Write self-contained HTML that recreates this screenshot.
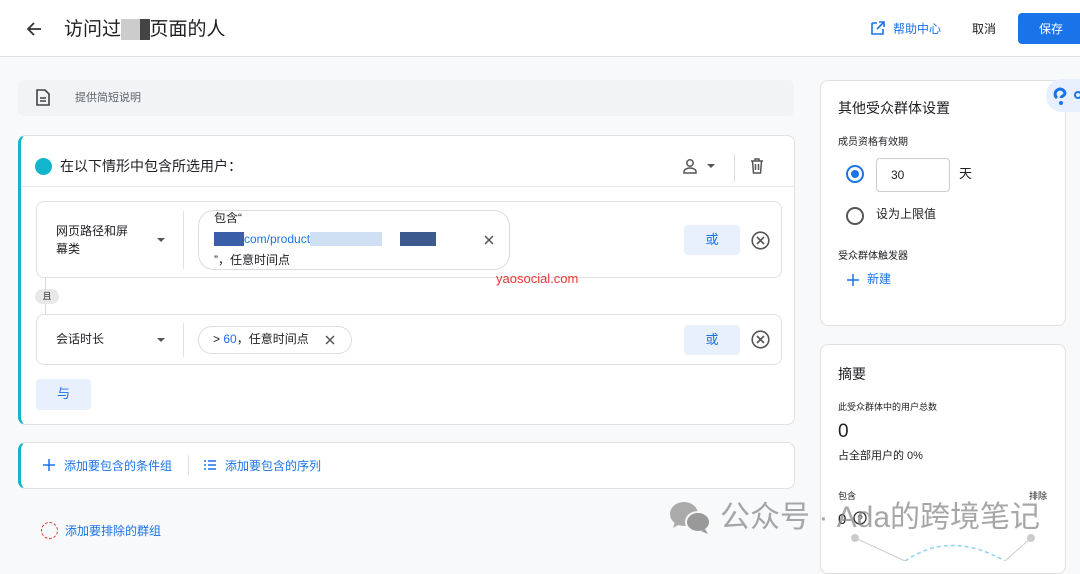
<!DOCTYPE html>
<html><head><meta charset="utf-8"><style>
*{box-sizing:border-box;margin:0;padding:0}
body{width:1080px;height:561px;overflow:hidden;background:#f8f9fa;font-family:"Liberation Sans","Noto Sans CJK SC",sans-serif;color:#202124;position:relative;line-height:1.3}
.a{position:absolute}
.card{position:absolute;background:#fff;border:1px solid #e0e0e0;border-radius:8px}
.blue{color:#1a73e8}
.btn{position:absolute;background:#e8f0fe;border-radius:4px;color:#1a73e8;font-size:13px;display:flex;align-items:center;justify-content:center}
</style></head><body>
<div class="a" style="left:0;top:0;width:1080px;height:57px;background:#fff;border-bottom:1px solid #e0e0e0"></div>
<svg class="a" style="left:26px;top:21px" width="16" height="16" viewBox="0 0 16 16"><path d="M15 8H2M8 2L2 8l6 6" stroke="#333" stroke-width="1.8" fill="none"/></svg>
<div class="a" style="left:64px;top:18px;font-size:19px">访问过<span style="background:#ccc;color:#ccc">xx</span><span style="background:#444;color:#444">x</span>页面的人</div>
<svg class="a" style="left:871px;top:21px" width="14" height="14" viewBox="0 0 14 14"><path d="M1 2h5M1 2v11h11V8M8 1h5v5M13 1L6 8" stroke="#1a73e8" stroke-width="1.6" fill="none"/></svg>
<div class="a blue" style="left:893px;top:22px;font-size:12px">帮助中心</div>
<div class="a" style="left:972px;top:22px;font-size:12px">取消</div>
<div class="a" style="left:1018px;top:13px;width:70px;height:31px;background:#1a73e8;border-radius:4px;color:#fff;font-size:12px;padding:9px 0 0 21px">保存</div>

<div class="a" style="left:18px;top:80px;width:776px;height:36px;background:#f1f3f4;border-radius:6px"></div>
<svg class="a" style="left:36px;top:89px" width="14" height="17" viewBox="0 0 14 17"><path d="M1 1h8l4 4v11H1z M4 9h6M4 12h6" stroke="#444" stroke-width="1.6" fill="none"/></svg>
<div class="a" style="left:75px;top:91px;font-size:11px;color:#5f6368">提供简短说明</div>

<div class="card" style="left:18px;top:135px;width:777px;height:290px;border-left:3px solid #12b5cb"></div>
<div class="a" style="left:21px;top:186px;width:773px;height:1px;background:#e8e8e8"></div>
<div class="a" style="left:35px;top:158px;width:17px;height:17px;border-radius:50%;background:#12b5cb"></div>
<div class="a" style="left:60px;top:157px;font-size:14px">在以下情形中包含所选用户：</div>
<svg class="a" style="left:683px;top:158px" width="36" height="16" viewBox="0 0 36 16"><circle cx="7" cy="5" r="3.2" stroke="#555" stroke-width="1.5" fill="none"/><path d="M1 15v-1.5c0-2 3-3.5 6-3.5s6 1.5 6 3.5V15z" stroke="#555" stroke-width="1.5" fill="none"/><path d="M24 6h8l-4 4z" fill="#555"/></svg>
<div class="a" style="left:734px;top:154px;width:1px;height:28px;background:#ddd"></div>
<svg class="a" style="left:750px;top:158px" width="14" height="16" viewBox="0 0 14 16"><path d="M1 3h12M5 3V1h4v2M2.5 3l1 12h7l1-12M5.5 6v6M8.5 6v6" stroke="#555" stroke-width="1.5" fill="none"/></svg>

<div class="card" style="left:36px;top:201px;width:746px;height:77px"></div>
<div class="a" style="left:56px;top:222px;font-size:12px;line-height:18px">网页路径和屏<br>幕类</div>
<svg class="a" style="left:157px;top:238px" width="8" height="5"><path d="M0 0h8L4 4z" fill="#555"/></svg>
<div class="a" style="left:183px;top:211px;width:1px;height:58px;background:#e0e0e0"></div>
<div class="a" style="left:198px;top:210px;width:312px;height:60px;border:1px solid #dadce0;border-radius:16px"></div>
<div class="a" style="left:214px;top:211px;font-size:12px">包含“</div>
<div class="a" style="left:214px;top:232px;font-size:12px"><span style="background:#3b5ea8;color:#3b5ea8">xxxxx</span><span class="blue">com/product</span><span style="background:#cfe0f5;color:transparent">xxxxxxxxxxxx</span><span style="color:transparent">xxx</span><span style="background:#3d5a8f;color:transparent">xxxxxx</span></div>
<svg class="a" style="left:484px;top:235px" width="10" height="10"><path d="M1 1l8 8M9 1l-8 8" stroke="#555" stroke-width="1.5"/></svg>
<div class="a" style="left:214px;top:253px;font-size:12px">”，任意时间点</div>
<div class="a" style="left:496px;top:271px;font-size:13px;color:#e53935">yaosocial.com</div>
<div class="btn" style="left:684px;top:225px;width:56px;height:30px">或</div>
<svg class="a" style="left:751px;top:231px" width="19" height="19"><circle cx="9.5" cy="9.5" r="8.3" stroke="#555" stroke-width="1.6" fill="none"/><path d="M6 6l7 7M13 6l-7 7" stroke="#555" stroke-width="1.6"/></svg>
<div class="a" style="left:45px;top:278px;width:1px;height:36px;background:#ddd"></div>
<div class="a" style="left:35px;top:289px;width:24px;height:15px;background:#e8e8e8;border-radius:8px;font-size:9px;text-align:center;line-height:15px">且</div>

<div class="card" style="left:36px;top:314px;width:746px;height:51px"></div>
<div class="a" style="left:56px;top:332px;font-size:12px">会话时长</div>
<svg class="a" style="left:157px;top:338px" width="8" height="5"><path d="M0 0h8L4 4z" fill="#555"/></svg>
<div class="a" style="left:183px;top:323px;width:1px;height:34px;background:#e0e0e0"></div>
<div class="a" style="left:198px;top:326px;width:154px;height:28px;border:1px solid #dadce0;border-radius:14px"></div>
<div class="a" style="left:213px;top:332px;font-size:12px">&gt; <span class="blue">60</span>，任意时间点</div>
<svg class="a" style="left:325px;top:335px" width="10" height="10"><path d="M1 1l8 8M9 1l-8 8" stroke="#555" stroke-width="1.5"/></svg>
<div class="btn" style="left:684px;top:325px;width:56px;height:30px">或</div>
<svg class="a" style="left:751px;top:330px" width="19" height="19"><circle cx="9.5" cy="9.5" r="8.3" stroke="#555" stroke-width="1.6" fill="none"/><path d="M6 6l7 7M13 6l-7 7" stroke="#555" stroke-width="1.6"/></svg>
<div class="btn" style="left:36px;top:379px;width:55px;height:31px">与</div>

<div class="card" style="left:18px;top:442px;width:777px;height:47px;border-left:3px solid #12b5cb"></div>
<svg class="a" style="left:43px;top:459px" width="12" height="12"><path d="M6 0v12M0 6h12" stroke="#1a73e8" stroke-width="1.5"/></svg>
<div class="a blue" style="left:64px;top:459px;font-size:12px">添加要包含的条件组</div>
<div class="a" style="left:188px;top:455px;width:1px;height:20px;background:#ddd"></div>
<svg class="a" style="left:204px;top:460px" width="12" height="10"><path d="M0 1h2M4 1h8M0 5h2M4 5h8M0 9h2M4 9h8" stroke="#1a73e8" stroke-width="1.4"/></svg>
<div class="a blue" style="left:225px;top:459px;font-size:12px">添加要包含的序列</div>
<div class="a" style="left:41px;top:522px;width:17px;height:17px;border:1.5px dashed #e53935;border-radius:50%"></div>
<div class="a blue" style="left:65px;top:524px;font-size:12px">添加要排除的群组</div>

<div class="card" style="left:820px;top:80px;width:246px;height:246px"></div>
<div class="a" style="left:838px;top:99px;font-size:14px">其他受众群体设置</div>
<div class="a" style="left:838px;top:136px;font-size:10px">成员资格有效期</div>
<div class="a" style="left:846px;top:165px;width:18px;height:18px;border:2px solid #1a73e8;border-radius:50%"></div>
<div class="a" style="left:851px;top:170px;width:8px;height:8px;background:#1a73e8;border-radius:50%"></div>
<div class="a" style="left:876px;top:158px;width:74px;height:34px;border:1px solid #ccc;border-radius:4px;font-size:12px;padding:9px 0 0 14px">30</div>
<div class="a" style="left:959px;top:166px;font-size:13px">天</div>
<div class="a" style="left:846px;top:207px;width:18px;height:18px;border:2px solid #555;border-radius:50%"></div>
<div class="a" style="left:876px;top:207px;font-size:12px">设为上限值</div>
<div class="a" style="left:838px;top:250px;font-size:10px">受众群体触发器</div>
<svg class="a" style="left:847px;top:274px" width="12" height="12"><path d="M6 0v12M0 6h12" stroke="#1a73e8" stroke-width="1.5"/></svg>
<div class="a blue" style="left:867px;top:272px;font-size:12px">新建</div>
<div class="a" style="left:1046px;top:79px;width:40px;height:33px;background:#e8f0fe;border-radius:16px 0 0 16px"></div>
<svg class="a" style="left:1052px;top:86px" width="28" height="20"><path d="M5 12a5 5 0 1 1 8-5c0 3-4 3-4 5" stroke="#1a73e8" stroke-width="3" fill="none"/><circle cx="9" cy="17" r="2" fill="#1a73e8"/><circle cx="26" cy="9" r="3" stroke="#1a73e8" stroke-width="2" fill="none"/></svg>

<div class="card" style="left:820px;top:344px;width:246px;height:230px"></div>
<div class="a" style="left:838px;top:365px;font-size:14px">摘要</div>
<div class="a" style="left:838px;top:402px;font-size:9px">此受众群体中的用户总数</div>
<div class="a" style="left:838px;top:420px;font-size:19px">0</div>
<div class="a" style="left:838px;top:449px;font-size:11px">占全部用户的 0%</div>
<div class="a" style="left:838px;top:491px;font-size:9px">包含</div>
<div class="a" style="left:1029px;top:491px;font-size:9px">排除</div>
<div class="a" style="left:838px;top:510px;font-size:15px">0</div>
<svg class="a" style="left:853px;top:511px" width="14" height="14"><circle cx="7" cy="7" r="6" stroke="#333" stroke-width="1.3" fill="none"/><text x="7" y="11" font-size="10" text-anchor="middle" fill="#333" font-family="Liberation Sans">?</text></svg>
<svg class="a" style="left:820px;top:530px" width="246" height="31"><circle cx="35" cy="8" r="4" fill="#ccc"/><circle cx="211" cy="8" r="4" fill="#ccc"/><path d="M35 8L85 31M211 8L185 31" stroke="#ccc"/><path d="M85 31Q130 0 185 31" stroke="#8fd3f0" stroke-dasharray="4 3" fill="none" stroke-width="1.5"/></svg>
<svg class="a" style="left:669px;top:500px" width="44" height="36"><ellipse cx="15" cy="14" rx="14" ry="12" fill="#aaa"/><path d="M6 22l-2 6 7-4z" fill="#aaa"/><ellipse cx="29" cy="22" rx="12" ry="10" fill="#999" stroke="#f8f9fa" stroke-width="2"/><path d="M36 29l3 5-7-3z" fill="#999"/></svg>
<div class="a" style="left:720px;top:498px;font-size:30px;color:rgba(130,130,130,.7)">公众号 · Ada的跨境笔记</div>
</body></html>
